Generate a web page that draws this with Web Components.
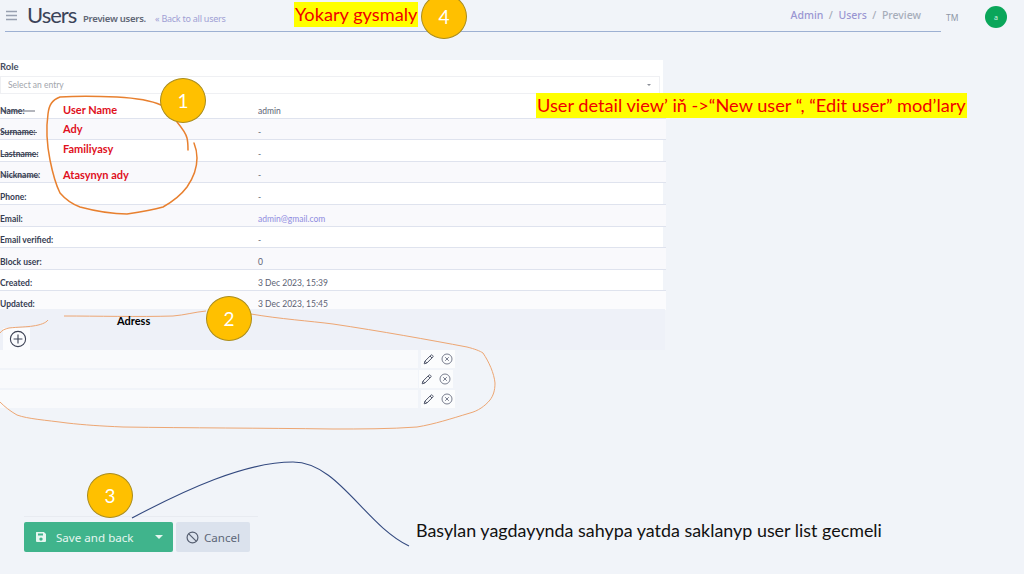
<!DOCTYPE html>
<html>
<head>
<meta charset="utf-8">
<title>Users</title>
<style>
    html, body { margin: 0; padding: 0; }
    body {
        position: relative;
        width: 1024px;
        height: 574px;
        overflow: hidden;
        background: #f1f4f9;
        font-family: "Noto Sans", sans-serif;
    }
</style>
</head>
<body>
<ph-header></ph-header>
<ph-detail-card>
    <ph-detail-row label="Name:">admin</ph-detail-row>
    <ph-detail-row label="Surname:">-</ph-detail-row>
    <ph-detail-row label="Lastname:">-</ph-detail-row>
    <ph-detail-row label="Nickname:">-</ph-detail-row>
    <ph-detail-row label="Phone:">-</ph-detail-row>
    <ph-detail-row label="Email:" link>admin@gmail.com</ph-detail-row>
    <ph-detail-row label="Email verified:">-</ph-detail-row>
    <ph-detail-row label="Block user:">0</ph-detail-row>
    <ph-detail-row label="Created:">3 Dec 2023, 15:39</ph-detail-row>
    <ph-detail-row label="Updated:" last>3 Dec 2023, 15:45</ph-detail-row>
</ph-detail-card>
<ph-address-list>
    <ph-address-row></ph-address-row>
    <ph-address-row style="--shift: -2px"></ph-address-row>
    <ph-address-row></ph-address-row>
</ph-address-list>
<ph-form-actions></ph-form-actions>

<!-- slide annotations on top of the screenshot -->
<ph-scribbles></ph-scribbles>
<ph-note x="294" y="2" kind="mark">Yokary gysmaly</ph-note>
<ph-note x="536" y="93" kind="mark">User detail view’ iň -&gt;“New user “, “Edit user” mod’lary</ph-note>
<ph-note x="416" y="519" kind="plain">Basylan yagdayynda sahypa yatda saklanyp user list gecmeli</ph-note>
<ph-note x="117" y="314" kind="title">Adress</ph-note>
<ph-note x="63" y="103" kind="field">User Name</ph-note>
<ph-note x="63" y="122" kind="field">Ady</ph-note>
<ph-note x="63" y="142" kind="field">Familiyasy</ph-note>
<ph-note x="63" y="168" kind="field">Atasynyn ady</ph-note>
<ph-callout x="160" y="78">1</ph-callout>
<ph-callout x="206" y="296">2</ph-callout>
<ph-callout x="87" y="473">3</ph-callout>
<ph-callout x="421" y="-6">4</ph-callout>

<script>
const headerTemplate = document.createElement('template');
headerTemplate.innerHTML = `
    <style>
        :host {
            display: flex;
            align-items: flex-start;
            height: 60px;
            font-family: "Noto Sans", sans-serif;
        }
        .bar {
            display: flex;
            align-items: center;
            box-sizing: border-box;
            width: 936px;
            height: 32px;
            margin-left: 5px;
            border-bottom: 1px solid #9db0d2;
        }
        .burger { width: 13px; height: 11px; margin-right: 9px; }
        h1 {
            flex: none;
            width: 56px;
            margin: -2px 0 0 0;
            font-family: Lato, sans-serif;
            font-size: 22px;
            font-weight: 400;
            letter-spacing: -1px;
            color: #3b4358;
        }
        .sub { margin-top: 6px; margin-right: 9px; font-size: 9.5px; font-weight: 600; color: #5f6675; letter-spacing: -.25px; }
        .back { margin-top: 6px; font-size: 9px; color: #a09fd4; letter-spacing: -.25px; }
        .crumbs {
            display: flex;
            gap: 5.5px;
            margin-left: auto;
            margin-right: 20px;
            margin-top: -2px;
            font-size: 10.5px;
            font-weight: 500;
            color: #9a96d2;
        }
        .crumbs .sep { color: #a8aeba; }
        .crumbs .now { color: #a6adb9; }
        .lang { margin: 12px 0 0 5px; width: 39px; font-size: 8.5px; color: #8f97a6; }
        .avatar {
            display: flex;
            align-items: center;
            justify-content: center;
            width: 22px;
            height: 22px;
            margin-top: 6px;
            border-radius: 50%;
            background: #0aa65a;
            color: #d8f2e4;
            font-size: 7px;
        }
    </style>
    <div class="bar">
        <svg class="burger" viewBox="0 0 13 11" fill="none" stroke="#98a0b0" stroke-width="1.3">
            <path d="M1 1.5h11M1 5.5h11M1 9.500h11"/>
        </svg>
        <h1>Users</h1>
        <span class="sub">Preview users.</span>
        <span class="back">« Back to all users</span>
        <div class="crumbs">
            <span>Admin</span><span class="sep">/</span><span>Users</span><span class="sep">/</span><span class="now">Preview</span>
        </div>
    </div>
    <span class="lang">TM</span>
    <span class="avatar">a</span>
`;

class HeaderComponent extends HTMLElement {
    constructor() {
        super();
        this.attachShadow({ mode: 'open' });
        this.shadowRoot.appendChild(headerTemplate.content.cloneNode(true));
    }
}

const detailCardTemplate = document.createElement('template');
detailCardTemplate.innerHTML = `
    <style>
        :host {
            display: block;
            box-sizing: border-box;
            width: 663px;
            height: 249px;
            background: #fff;
            font-family: Lato, sans-serif;
        }
        .role {
            height: 16px;
            padding-top: 0;
            box-sizing: border-box;
            font-size: 9.5px;
            font-weight: 700;
            line-height: 13px;
            color: #4a5063;
        }
        .select {
            display: flex;
            align-items: center;
            justify-content: space-between;
            box-sizing: border-box;
            height: 18px;
            margin-right: 3px;
            padding: 0 8px 0 7px;
            margin-bottom: 3px;
            border: 1px solid #eff0f3;
            font-size: 8.5px;
            color: #a2a5ac;
        }
        .caret { width: 0; height: 0; border: 2px solid transparent; border-top: 2.5px solid #8b8f98; border-bottom: 0; }
    </style>
    <div class="role">Role</div>
    <div class="select"><span>Select an entry</span><span class="caret"></span></div>
    <slot></slot>
`;

class DetailCardComponent extends HTMLElement {
    constructor() {
        super();
        this.attachShadow({ mode: 'open' });
        this.shadowRoot.appendChild(detailCardTemplate.content.cloneNode(true));
    }
}

const detailRowTemplate = document.createElement('template');
detailRowTemplate.innerHTML = `
    <style>
        :host {
            display: grid;
            grid-template-columns: 258px 1fr;
            align-items: end;
            box-sizing: border-box;
            width: 666px;
            height: 21.6px;
            padding-bottom: 1px;
            border-bottom: 1px solid #dfe3ee;
            font-family: Lato, sans-serif;
            font-size: 8.5px;
            line-height: 12px;
            color: #5b6273;
        }
        :host(:nth-of-type(even)) { background: #f9f9fc; }
        :host([last]) { height: 19px; padding-bottom: 0; border-bottom: 0; background: #fbfbfd; }
        :host([link]) .value { color: #8f8ce0; }
        .label { font-weight: 700; color: #363d52; }
    </style>
    <span class="label"></span>
    <span class="value"><slot></slot></span>
`;

class DetailRowComponent extends HTMLElement {
    constructor() {
        super();
        this.attachShadow({ mode: 'open' });
        this.shadowRoot.appendChild(detailRowTemplate.content.cloneNode(true));
        this.shadowRoot.querySelector('.label').textContent = this.getAttribute('label');
    }
}

const addressListTemplate = document.createElement('template');
addressListTemplate.innerHTML = `
    <style>
        :host { display: block; }
        .band {
            width: 665px;
            height: 41px;
            background: #eef1f8;
        }
        .add {
            display: flex;
            align-items: center;
            justify-content: center;
            box-sizing: border-box;
            width: 27px;
            height: 22px;
            margin-left: 3px;
            padding-left: 3px;
            position: relative;
            top: 19px;
            background: #fbfcfe;
        }
        svg { width: 18px; height: 18px; }
        .rows { display: flex; flex-direction: column; gap: 2px; }
    </style>
    <div class="band">
        <div class="add">
            <svg viewBox="0 0 18 18" fill="none" stroke="#3c4254" stroke-width="1.1">
                <circle cx="9" cy="9" r="7.6"/><path d="M9 4.6v8.8M4.6 9h8.8"/>
            </svg>
        </div>
    </div>
    <div class="rows"><slot></slot></div>
`;

class AddressListComponent extends HTMLElement {
    constructor() {
        super();
        this.attachShadow({ mode: 'open' });
        this.shadowRoot.appendChild(addressListTemplate.content.cloneNode(true));
    }
}

const addressRowTemplate = document.createElement('template');
addressRowTemplate.innerHTML = `
    <style>
        :host {
            display: flex;
            height: 18px;
        }
        .field { width: 418px; background: #f9fafc; }
        .actions {
            display: flex;
            align-items: center;
            gap: 6px;
            box-sizing: border-box;
            width: 34px;
            margin-left: calc(3px + var(--shift, 0px));
            padding-left: 2px;
            background: #fbfcfd;
        }
        svg { width: 12px; height: 12px; }
    </style>
    <div class="field"></div>
    <div class="actions">
        <svg viewBox="0 0 12 12" fill="none" stroke="#50566a" stroke-width="1">
            <path d="M1.2 10.8l.7-2.6 6-6a1 1 0 0 1 1.4 0l.5.5a1 1 0 0 1 0 1.4l-6 6zM7 3l2 2M2 8.200l1.800 1.800"/>
        </svg>
        <svg viewBox="0 0 12 12" fill="none" stroke="#6b7182" stroke-width=".9">
            <circle cx="6" cy="6" r="5"/><path d="M4.2 4.2l3.6 3.6M7.800 4.200l-3.600 3.600"/>
        </svg>
    </div>
`;

class AddressRowComponent extends HTMLElement {
    constructor() {
        super();
        this.attachShadow({ mode: 'open' });
        this.shadowRoot.appendChild(addressRowTemplate.content.cloneNode(true));
    }
}

const formActionsTemplate = document.createElement('template');
formActionsTemplate.innerHTML = `
    <style>
        :host {
            display: flex;
            gap: 3px;
            box-sizing: border-box;
            width: 234px;
            margin: 108px 0 0 24px;
            padding-top: 5px;
            border-top: 1px solid #e8ebf1;
            font-family: "Noto Sans", sans-serif;
            font-size: 11.6px;
        }
        .btn {
            display: flex;
            align-items: center;
            height: 30px;
            box-sizing: border-box;
            border-radius: 2px;
        }
        .save {
            width: 149px;
            padding-left: 11px;
            background: #40b48c;
            color: #e6f6f0;
        }
        .save svg { width: 12px; height: 12px; margin-right: 9px; }
        .save .caret {
            margin-left: auto;
            margin-right: 10px;
            width: 0;
            height: 0;
            border: 4px solid transparent;
            border-top: 4px solid #e6f6f0;
            border-bottom: 0;
        }
        .cancel {
            width: 74px;
            padding-left: 10px;
            background: #dbe2ed;
            color: #5d6778;
        }
        .cancel svg { width: 13px; height: 13px; margin-right: 5px; }
    </style>
    <div class="btn save">
        <svg viewBox="0 0 12 12" fill="#e6f6f0">
            <path fill-rule="evenodd" d="M1.5 1h7.4L11 3.1v6.9a1 1 0 0 1-1 1H2a1 1 0 0 1-1-1V1.500a.5.5 0 0 1 .5-.5zM3 2.400v2.200h5V2.400zM6 6.400a1.700 1.700 0 1 0 0 3.400 1.700 1.700 0 0 0 0-3.400z"/>
        </svg>
        <span>Save and back</span>
        <span class="caret"></span>
    </div>
    <div class="btn cancel">
        <svg viewBox="0 0 12 12" fill="none" stroke="#555e70" stroke-width="1.1">
            <circle cx="6" cy="6" r="5"/><path d="M2.600 2.600l6.800 6.800"/>
        </svg>
        <span>Cancel</span>
    </div>
`;

class FormActionsComponent extends HTMLElement {
    constructor() {
        super();
        this.attachShadow({ mode: 'open' });
        this.shadowRoot.appendChild(formActionsTemplate.content.cloneNode(true));
    }
}

const calloutTemplate = document.createElement('template');
calloutTemplate.innerHTML = `
    <style>
        :host {
            position: absolute;
            display: flex;
            align-items: center;
            justify-content: center;
            box-sizing: border-box;
            width: 46px;
            height: 45px;
            border: 1px solid #a98c1d;
            border-radius: 50%;
            background: #ffc000;
            color: #fff;
            font-family: Lato, sans-serif;
            font-size: 19px;
        }
    </style>
    <slot></slot>
`;

class CalloutComponent extends HTMLElement {
    constructor() {
        super();
        this.attachShadow({ mode: 'open' });
        this.shadowRoot.appendChild(calloutTemplate.content.cloneNode(true));
        this.style.left = this.getAttribute('x') + 'px';
        this.style.top = this.getAttribute('y') + 'px';
    }
}

const noteTemplate = document.createElement('template');
noteTemplate.innerHTML = `
    <style>
        :host {
            position: absolute;
            font-family: Lato, sans-serif;
            white-space: nowrap;
        }
        :host([kind="mark"]) {
            padding: 0 1px;
            background: #ffff00;
            color: #f00000;
            font-size: 18.2px;
            line-height: 25px;
        }
        :host([kind="plain"]) { color: #111; font-size: 17.9px; line-height: 22px; }
        :host([kind="title"]) { color: #000; font-size: 11px; font-weight: 700; line-height: 14px; }
        :host([kind="field"]) { color: #e0101c; font-size: 11px; font-weight: 700; line-height: 14px; }
    </style>
    <slot></slot>
`;

class NoteComponent extends HTMLElement {
    constructor() {
        super();
        this.attachShadow({ mode: 'open' });
        this.shadowRoot.appendChild(noteTemplate.content.cloneNode(true));
        this.style.left = this.getAttribute('x') + 'px';
        this.style.top = this.getAttribute('y') + 'px';
    }
}

const scribblesTemplate = document.createElement('template');
scribblesTemplate.innerHTML = `
    <style>
        :host { position: absolute; left: 0; top: 0; width: 1024px; height: 574px; pointer-events: none; }
        svg { display: block; }
    </style>
    <svg width="1024" height="574" fill="none">
        <g stroke="#414859" stroke-width=".8">
            <path d="M1 111h34M1 132.500h36M1 154.500h37M1 176h38"/>
        </g>
        <g stroke="#e8802f" stroke-width="1.5" stroke-linecap="round">
            <path d="M161 105C150 100 135 98 117 97C95 96 75 96 60 97C52 100 49 105 48 114C46 128 47 145 50 160C53 175 56 185 60 193C66 200 72 204 80 207C95 211 112 214 127 214C140 212 152 210 163 207C172 202 181 195 187 187C194 177 197 168 197 158C197 152 196 148 194 143"/>
            <path d="M177 122C182 128 186 134 187 138C188 142 188 146 188 150"/>
        </g>
        <g stroke="#eda673" stroke-width="1">
            <path d="M0 333C2 330 5 329 9 328C18 327 27 327 33 326C40 325 46 323 48 320"/>
            <path d="M64 316C95 316 140 317 173 316C185 315 195 312 206 311"/>
            <path d="M251 314C280 319 310 321 333 324C380 331 430 340 467 347C475 349 480 351 483 353C489 362 494 373 495 383C495 391 493 396 490 400C485 406 478 411 470 413C450 419 435 424 417 427C390 429 360 429 333 429C260 428 190 428 123 427C100 426 85 425 67 423C45 420 28 419 17 415C10 411 5 407 0 402"/>
        </g>
        <path d="M132 518C185 490 245 462 293 462C338 462 365 525 409 546" stroke="#33497f" stroke-width="1.1"/>
    </svg>
`;

class ScribblesComponent extends HTMLElement {
    constructor() {
        super();
        this.attachShadow({ mode: 'open' });
        this.shadowRoot.appendChild(scribblesTemplate.content.cloneNode(true));
    }
}

window.customElements.define('ph-header', HeaderComponent);
window.customElements.define('ph-detail-card', DetailCardComponent);
window.customElements.define('ph-detail-row', DetailRowComponent);
window.customElements.define('ph-address-list', AddressListComponent);
window.customElements.define('ph-address-row', AddressRowComponent);
window.customElements.define('ph-form-actions', FormActionsComponent);
window.customElements.define('ph-callout', CalloutComponent);
window.customElements.define('ph-note', NoteComponent);
window.customElements.define('ph-scribbles', ScribblesComponent);
</script>
</body>
</html>
